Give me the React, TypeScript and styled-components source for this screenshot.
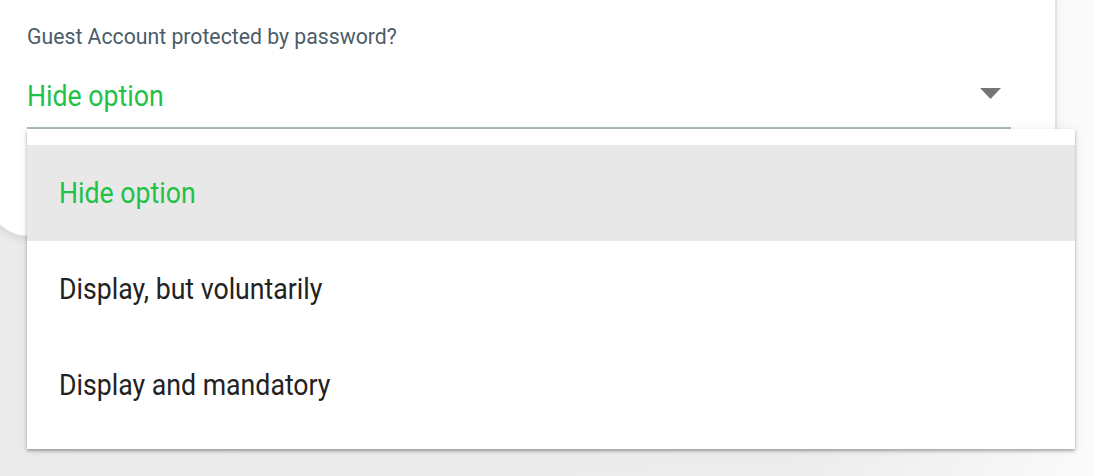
import React from "react";
import styled, { createGlobalStyle } from "styled-components";

const Global = createGlobalStyle`
  html, body { margin: 0; padding: 0; }
  body {
    width: 1095px;
    height: 476px;
    overflow: hidden;
    font-family: Roboto, "Liberation Sans", sans-serif;
    background: linear-gradient(to right, #ebebeb 0%, #ececec 72%, #f4f4f4 88%, #fbfbfb 100%);
  }
`;

const Page = styled.div`
  position: relative;
  width: 1095px;
  height: 476px;
`;

const Card = styled.section`
  margin-left: -12px;
  width: 1067px;
  height: 236px;
  box-sizing: border-box;
  padding: 0 0 0 39px;
  background: #ffffff;
  border-radius: 0 0 0 40px;
  box-shadow: 2px 0 0 #dde2e5, 0 3px 8px rgba(0, 0, 0, 0.1);
`;

const FieldLabel = styled.div`
  padding-top: 26px;
  font-size: 22px;
  line-height: 22px;
  color: #4b5d68;
  transform: scaleX(0.965);
  transform-origin: left center;
  white-space: nowrap;
`;

const SelectRow = styled.div`
  width: 984px;
  box-sizing: border-box;
  display: flex;
  align-items: center;
  justify-content: space-between;
  padding: 30px 10px 13px 0;
  border-bottom: 2px solid #adbbc3;
`;

const Value = styled.span<{ $active?: boolean }>`
  display: inline-block;
  font-size: 29px;
  line-height: 36px;
  color: ${(p) => (p.$active ? "#1fc149" : "#222222")};
  transform: scaleX(0.92);
  transform-origin: left center;
  white-space: nowrap;
`;

const Arrow = styled.svg`
  width: 21px;
  height: 11px;
  margin-bottom: 6px;
`;

const Menu = styled.ul`
  position: absolute;
  top: 129px;
  left: 27px;
  width: 1048px;
  margin: 0;
  padding: 16px 0;
  list-style: none;
  background: #ffffff;
  box-shadow: 0 2px 3px rgba(0, 0, 0, 0.3), 0 1px 10px rgba(0, 0, 0, 0.08);
`;

const Item = styled.li<{ $selected?: boolean }>`
  height: 96px;
  display: flex;
  align-items: center;
  padding-left: 32px;
  background: ${(p) => (p.$selected ? "#e8e8e8" : "transparent")};
`;

const options = ["Hide option", "Display, but voluntarily", "Display and mandatory"];

export default function App() {
  return (
    <Page>
      <Global />
      <Card>
        <FieldLabel>Guest Account protected by password?</FieldLabel>
        <SelectRow>
          <Value $active>Hide option</Value>
          <Arrow viewBox="0 0 21 11">
            <path d="M0 0 L21 0 L10.5 11 Z" fill="#757575" />
          </Arrow>
        </SelectRow>
      </Card>
      <Menu>
        {options.map((o, i) => (
          <Item key={o} $selected={i === 0}>
            <Value $active={i === 0}>{o}</Value>
          </Item>
        ))}
      </Menu>
    </Page>
  );
}
